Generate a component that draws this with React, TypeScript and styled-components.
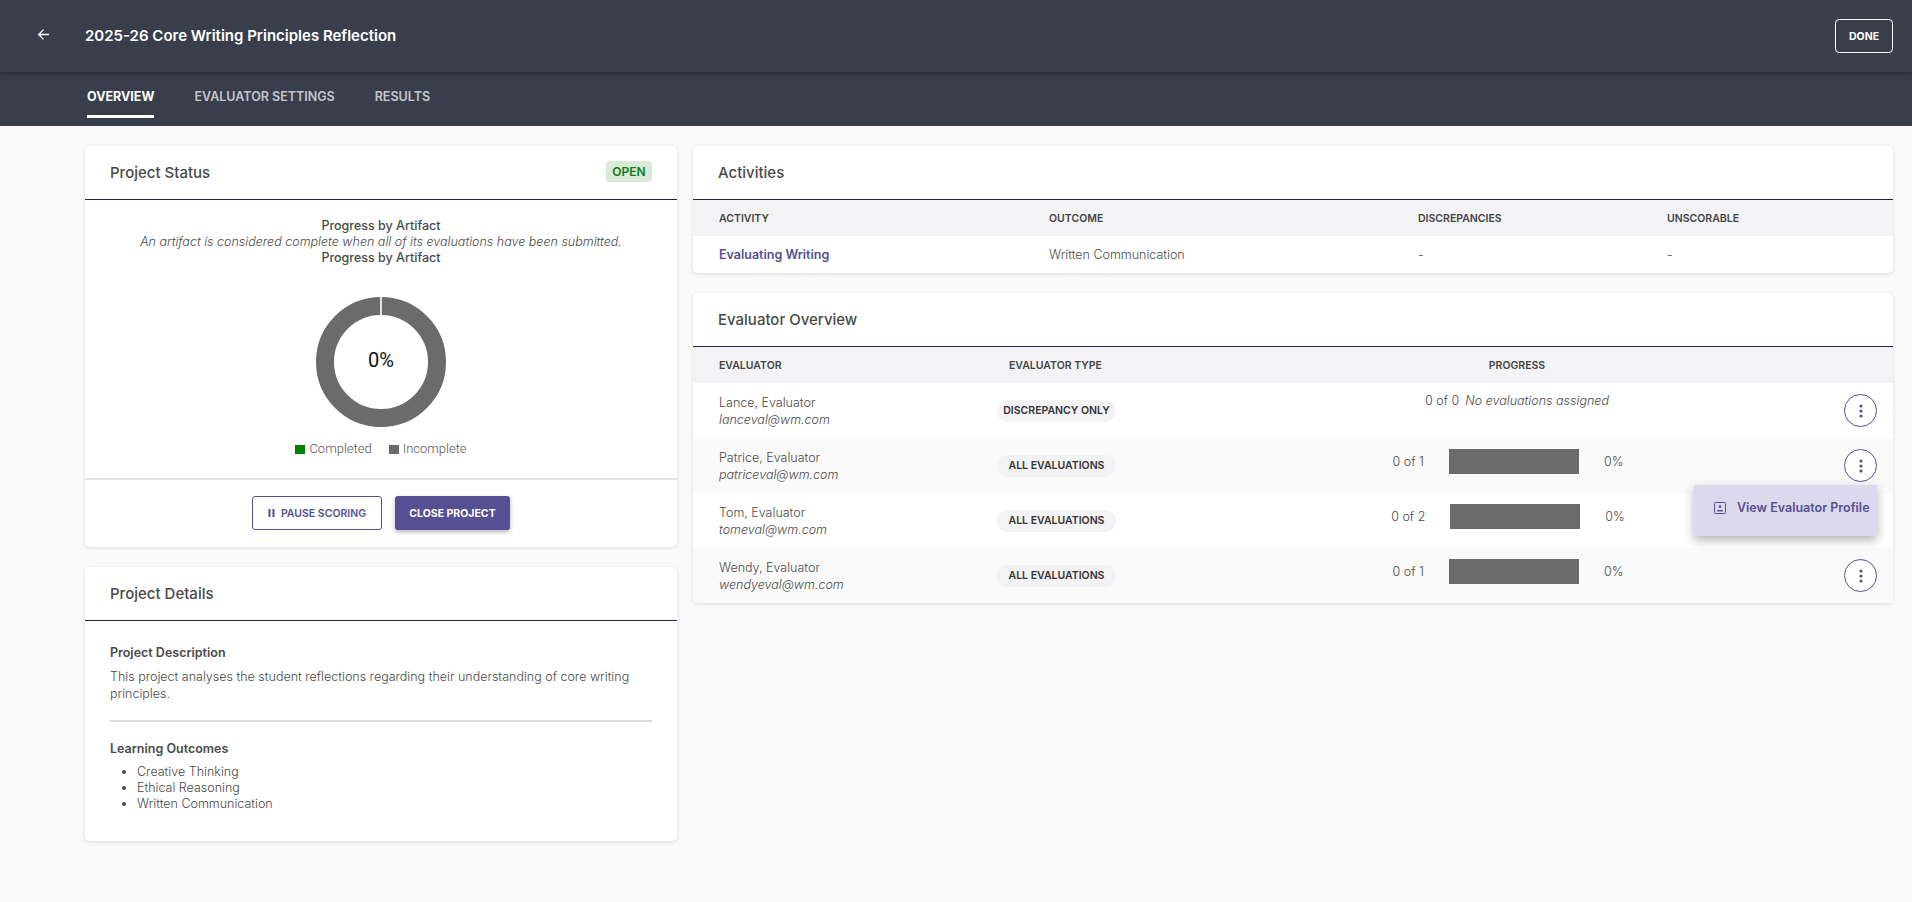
import React from 'react';
import styled, { createGlobalStyle } from 'styled-components';

const PURPLE = '#574f93';
const INK = '#4a4a4a';

const GlobalStyle = createGlobalStyle`
  html, body {
    margin: 0;
    padding: 0;
    background: #fafafa;
    font-family: Inter, "Liberation Sans", sans-serif;
    color: ${INK};
    font-size: 13px;
    overflow: hidden;
  }
  * { box-sizing: border-box; }
`;

const Page = styled.div`
  width: 1912px;
  height: 902px;
  background: #fafafa;
`;

const TopBar = styled.header`
  position: relative;
  z-index: 2;
  height: 72px;
  background: #393e4c;
  box-shadow: 0 2px 4px rgba(0, 0, 0, 0.25);
  display: flex;
  align-items: center;
  padding: 0 19px 0 37px;
  color: #fff;
`;

const BackButton = styled.button`
  width: 13px;
  height: 13px;
  padding: 0;
  border: 0;
  background: none;
  color: #fff;
  display: flex;
  margin: -4px 35px 0 0;
`;

const Title = styled.h1`
  margin: 0;
  flex: 1;
  font-size: 15px;
  font-weight: 600;
  line-height: 20px;
`;

const DoneButton = styled.button`
  width: 58px;
  height: 34px;
  background: none;
  border: 1px solid #fff;
  border-radius: 4px;
  color: #fff;
  font: 700 10.5px Inter, sans-serif;
`;

const Tabs = styled.nav`
  height: 54px;
  background: #393e4c;
  display: flex;
  gap: 40px;
  padding-left: 87px;
`;

const Tab = styled.a<{ $active?: boolean }>`
  height: 46px;
  padding-top: 16px;
  font-size: 12.5px;
  font-weight: ${(p) => (p.$active ? 700 : 600)};
  line-height: 18px;
  color: ${(p) => (p.$active ? '#fff' : '#c4c6cc')};
  border-bottom: 3px solid ${(p) => (p.$active ? '#fff' : 'transparent')};
`;

const Content = styled.main`
  display: grid;
  grid-template-columns: 592px 1200px;
  gap: 16px;
  padding: 20px 0 0 85px;
`;

const Column = styled.div`
  display: flex;
  flex-direction: column;
  gap: 20px;
`;

const Card = styled.section`
  background: #fff;
  border-radius: 5px;
  box-shadow: 0 1px 4px rgba(0, 0, 0, 0.12);
  overflow: visible;
`;

const CardHeader = styled.div`
  height: 54px;
  border-bottom: 1px solid #2c1f4f;
  display: flex;
  align-items: center;
  justify-content: space-between;
  padding: 0 25px 0 25px;
`;

const CardTitle = styled.h2`
  margin: 0;
  font-size: 15px;
  font-weight: 500;
  color: ${INK};
`;

const StatusChip = styled.span`
  width: 46px;
  height: 21px;
  margin-top: -3px;
  border-radius: 4px;
  background: #d9ead6;
  color: #0d7a14;
  font-size: 12px;
  font-weight: 600;
  display: flex;
  align-items: center;
  justify-content: center;
`;

const ProgressBlock = styled.div`
  padding-top: 18px;
  text-align: center;
  line-height: 16px;
  font-size: 12.5px;
`;

const Strong = styled.div`
  font-weight: 500;
`;

const Note = styled.div`
  font-style: italic;
  font-weight: 300;
`;

const Donut = styled.div`
  position: relative;
  width: 130px;
  height: 130px;
  margin: 31px auto 0;
`;

const DonutLabel = styled.div`
  position: absolute;
  inset: 0;
  display: flex;
  align-items: center;
  justify-content: center;
  font: 400 20px Roboto, sans-serif;
  color: #111;
  padding-bottom: 4px;
`;

const Legend = styled.div`
  height: 53px;
  display: flex;
  justify-content: center;
  gap: 17px;
  padding: 14px 0 0 0;
  font: 300 13px/16px Roboto, sans-serif;
  color: #555;
  border-bottom: 2px solid #e2e2e2;
`;

const LegendItem = styled.span`
  display: flex;
  gap: 4px;
  height: 16px;
`;

const Swatch = styled.i<{ $color: string }>`
  width: 10px;
  height: 9px;
  margin-top: 4px;
  background: ${(p) => p.$color};
`;

const Actions = styled.div`
  display: flex;
  justify-content: center;
  gap: 13px;
  padding: 16px 0 17px;
`;

const OutlineButton = styled.button`
  width: 130px;
  height: 34px;
  padding: 0;
  background: #fff;
  border: 1px solid ${PURPLE};
  border-radius: 3px;
  color: ${PURPLE};
  font: 600 10.5px Inter, sans-serif;
  display: flex;
  align-items: center;
  justify-content: center;
  gap: 6px;
`;

const FilledButton = styled.button`
  width: 115px;
  height: 34px;
  padding: 0;
  background: ${PURPLE};
  border: 0;
  border-radius: 3px;
  color: #fff;
  font: 700 10.5px Inter, sans-serif;
  box-shadow: 0 2px 4px rgba(0, 0, 0, 0.3);
`;

const DetailsBody = styled.div`
  padding: 24px 25px 29px;
  line-height: 16px;
  font-size: 12.5px;
`;

const Label = styled.div`
  font-weight: 600;
`;

const Paragraph = styled.p`
  margin: 7px 0 0;
  font-weight: 300;
  line-height: 17px;
`;

const Rule = styled.hr`
  margin: 18px 0 19px;
  border: 0;
  height: 2px;
  background: #dcdcdc;
`;

const OutcomeList = styled.ul`
  margin: 7px 0 0;
  padding-left: 27px;
  font-weight: 300;
`;

const ActivityRow = styled.div<{ $head?: boolean }>`
  display: grid;
  grid-template-columns: 330px 369px 249px 1fr;
  align-items: center;
  padding-left: 26px;
  height: ${(p) => (p.$head ? '36px' : '37px')};
  background: ${(p) => (p.$head ? '#f3f3f6' : 'transparent')};
`;

const Th = styled.div<{ $pad?: number; $center?: boolean }>`
  font-size: 10.5px;
  font-weight: 600;
  color: #444;
  padding-left: ${(p) => p.$pad ?? 0}px;
  text-align: ${(p) => (p.$center ? 'center' : 'left')};
`;

const Cell = styled.div`
  font-size: 12.5px;
  font-weight: 300;
`;

const ActivityLink = styled.a`
  font-size: 12.5px;
  font-weight: 600;
  color: ${PURPLE};
`;

const EvalRow = styled.div<{ $head?: boolean; $alt?: boolean }>`
  display: grid;
  grid-template-columns: 278px 193px 654px 33px;
  align-items: center;
  padding: 0 16px 0 26px;
  height: ${(p) => (p.$head ? '36px' : '55px')};
  background: ${(p) => (p.$head ? '#f3f3f6' : p.$alt ? '#fafafa' : 'transparent')};
`;

const Person = styled.div`
  line-height: 17px;
  font-size: 12.5px;
  font-weight: 300;
`;

const Email = styled.div`
  font-style: italic;
`;

const TypeChip = styled.span`
  width: 119px;
  height: 22px;
  border-radius: 11px;
  background: #f3f2f5;
  color: #333;
  font-size: 10.5px;
  font-weight: 600;
  display: flex;
  align-items: center;
  justify-content: center;
`;

const EmptyProgress = styled.div`
  align-self: start;
  padding-top: 10px;
  text-align: center;
  font-size: 12.5px;
  font-weight: 300;
  line-height: 16px;
`;

const EmptyNote = styled.em`
  margin-left: 6px;
`;

const ProgressLine = styled.div`
  display: flex;
  align-items: center;
  justify-content: center;
  gap: 25px;
  padding: 0 18px 8px 0;
  font-size: 12.5px;
  font-weight: 300;
`;

const Bar = styled.div`
  width: 130px;
  height: 25px;
  background: #6b6b6b;
`;

const KebabWrap = styled.div`
  position: relative;
  width: 33px;
  height: 33px;
`;

const Kebab = styled.button`
  width: 33px;
  height: 33px;
  padding: 0;
  border: 1px solid ${PURPLE};
  border-radius: 50%;
  background: #fff;
  color: ${PURPLE};
  display: flex;
  align-items: center;
  justify-content: center;
`;

const Menu = styled.div`
  position: absolute;
  z-index: 5;
  top: 36px;
  right: 0;
  width: 183px;
  height: 51px;
  background: #dcd9ec;
  box-shadow: 0 4px 10px rgba(0, 0, 0, 0.3);
  display: flex;
  align-items: center;
  gap: 11px;
  padding: 0 0 6px 20px;
  color: ${PURPLE};
  font-size: 12.5px;
  font-weight: 600;
  white-space: nowrap;
`;

function KebabIcon() {
  return (
    <svg width="4" height="14" viewBox="0 0 4 14" fill="currentColor">
      <circle cx="2" cy="2" r="1.6" />
      <circle cx="2" cy="7" r="1.6" />
      <circle cx="2" cy="12" r="1.6" />
    </svg>
  );
}

const evaluators = [
  { name: 'Lance, Evaluator', email: 'lanceval@wm.com', type: 'DISCREPANCY ONLY', done: '0 of 0' },
  { name: 'Patrice, Evaluator', email: 'patriceval@wm.com', type: 'ALL EVALUATIONS', done: '0 of 1', menu: true },
  { name: 'Tom, Evaluator', email: 'tomeval@wm.com', type: 'ALL EVALUATIONS', done: '0 of 2', hidden: true },
  { name: 'Wendy, Evaluator', email: 'wendyeval@wm.com', type: 'ALL EVALUATIONS', done: '0 of 1' },
];

export default function App() {
  return (
    <Page>
      <GlobalStyle />
      <TopBar>
        <BackButton>
          <svg width="13" height="13" viewBox="0 0 24 24" fill="none" stroke="currentColor" strokeWidth="2.4">
            <path d="M22 12H3M12 3l-9 9 9 9" />
          </svg>
        </BackButton>
        <Title>2025-26 Core Writing Principles Reflection</Title>
        <DoneButton>DONE</DoneButton>
      </TopBar>
      <Tabs>
        <Tab $active>OVERVIEW</Tab>
        <Tab>EVALUATOR SETTINGS</Tab>
        <Tab>RESULTS</Tab>
      </Tabs>
      <Content>
        <Column>
          <Card>
            <CardHeader>
              <CardTitle>Project Status</CardTitle>
              <StatusChip>OPEN</StatusChip>
            </CardHeader>
            <ProgressBlock>
              <Strong>Progress by Artifact</Strong>
              <Note>An artifact is considered complete when all of its evaluations have been submitted.</Note>
              <Strong>Progress by Artifact</Strong>
            </ProgressBlock>
            <Donut>
              <svg width="130" height="130" viewBox="0 0 130 130">
                <circle cx="65" cy="65" r="56" fill="none" stroke="#6b6b6b" strokeWidth="18" />
                <rect x="64.2" y="0" width="1.6" height="19" fill="#fff" />
              </svg>
              <DonutLabel>0%</DonutLabel>
            </Donut>
            <Legend>
              <LegendItem>
                <Swatch $color="#008000" />
                Completed
              </LegendItem>
              <LegendItem>
                <Swatch $color="#6b6b6b" />
                Incomplete
              </LegendItem>
            </Legend>
            <Actions>
              <OutlineButton>
                <svg width="7" height="8" viewBox="0 0 7 8" fill="currentColor">
                  <rect x="0.5" width="2" height="8" />
                  <rect x="4.5" width="2" height="8" />
                </svg>
                PAUSE SCORING
              </OutlineButton>
              <FilledButton>CLOSE PROJECT</FilledButton>
            </Actions>
          </Card>
          <Card>
            <CardHeader>
              <CardTitle>Project Details</CardTitle>
            </CardHeader>
            <DetailsBody>
              <Label>Project Description</Label>
              <Paragraph>
                This project analyses the student reflections regarding their understanding of core writing principles.
              </Paragraph>
              <Rule />
              <Label>Learning Outcomes</Label>
              <OutcomeList>
                <li>Creative Thinking</li>
                <li>Ethical Reasoning</li>
                <li>Written Communication</li>
              </OutcomeList>
            </DetailsBody>
          </Card>
        </Column>
        <Column>
          <Card>
            <CardHeader>
              <CardTitle>Activities</CardTitle>
            </CardHeader>
            <ActivityRow $head>
              <Th>ACTIVITY</Th>
              <Th>OUTCOME</Th>
              <Th>DISCREPANCIES</Th>
              <Th>UNSCORABLE</Th>
            </ActivityRow>
            <ActivityRow>
              <ActivityLink>Evaluating Writing</ActivityLink>
              <Cell>Written Communication</Cell>
              <Cell>-</Cell>
              <Cell>-</Cell>
            </ActivityRow>
          </Card>
          <Card>
            <CardHeader>
              <CardTitle>Evaluator Overview</CardTitle>
            </CardHeader>
            <EvalRow $head>
              <Th>EVALUATOR</Th>
              <Th $pad={12}>EVALUATOR TYPE</Th>
              <Th $center>PROGRESS</Th>
              <span />
            </EvalRow>
            {evaluators.map((e, i) => (
              <EvalRow key={e.email} $alt={i % 2 === 1}>
                <Person>
                  {e.name}
                  <Email>{e.email}</Email>
                </Person>
                <TypeChip>{e.type}</TypeChip>
                {e.done === '0 of 0' ? (
                  <EmptyProgress>
                    {e.done}
                    <EmptyNote>No evaluations assigned</EmptyNote>
                  </EmptyProgress>
                ) : (
                  <ProgressLine>
                    <span>{e.done}</span>
                    <Bar />
                    <span>0%</span>
                  </ProgressLine>
                )}
                <KebabWrap>
                  {!e.hidden && (
                    <Kebab>
                      <KebabIcon />
                    </Kebab>
                  )}
                  {e.menu && (
                    <Menu>
                      <svg width="12" height="12" viewBox="0 0 12 12" fill="none" stroke="currentColor">
                        <rect x="0.5" y="0.5" width="11" height="11" rx="1" />
                        <circle cx="6" cy="4.6" r="1.3" fill="currentColor" stroke="none" />
                        <path d="M3 8.8h6" strokeWidth="1.4" />
                      </svg>
                      View Evaluator Profile
                    </Menu>
                  )}
                </KebabWrap>
              </EvalRow>
            ))}
          </Card>
        </Column>
      </Content>
    </Page>
  );
}
